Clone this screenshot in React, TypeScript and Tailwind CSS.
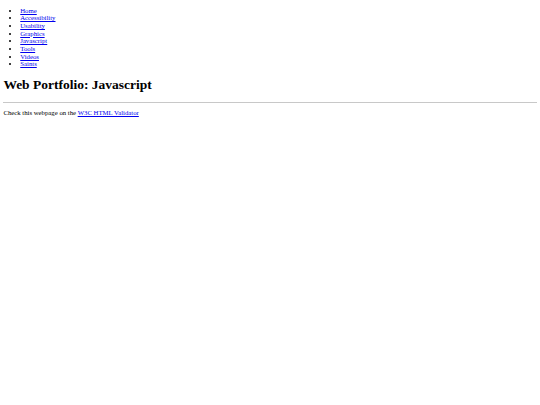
const links = [
  'Home',
  'Accessibility',
  'Usability',
  'Graphics',
  'Javascript',
  'Tools',
  'Videos',
  'Saints',
];

const App = () => {
  return (
    <div className="min-h-[405px] bg-white px-[3.375px] py-[6.75px] font-['Liberation_Serif',serif] text-[6.75px] leading-[7.65px] text-black">
      <ul className="mb-[6.75px] list-disc pl-[16.875px]">
        {links.map((name) => (
          <li key={name}>
            <a href="#" className="text-[#0000ee] underline">
              {name}
            </a>
          </li>
        ))}
      </ul>
      <h1 className="my-[9.045px] text-[13.5px] leading-[15.5px] font-bold">
        Web Portfolio: Javascript
      </h1>
      <hr className="mt-[9.045px] border-t-[0.84px] border-[#c8c8c8]" />
      <p className="mt-[6.75px]">
        Check this webpage on the{' '}
        <a href="#" className="text-[#0000ee] underline">
          W3C HTML Validator
        </a>
      </p>
    </div>
  );
};

export default App;
